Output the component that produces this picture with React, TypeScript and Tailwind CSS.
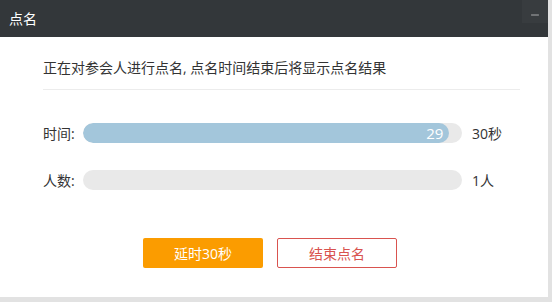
import { Minus } from 'lucide-react';

const font = { fontFamily: '"Open Sans", "Noto Sans CJK SC", sans-serif' };

function ProgressRow({ label, value, max, unit }: { label: string; value: number; max: number; unit: string }) {
  const pct = (value / max) * 100;
  return (
    <div className="flex items-center h-5">
      <span className="w-10 text-[14px] text-[#333]">{label}</span>
      <div className="w-[379px] h-5 rounded-full bg-[#e9e9e9] overflow-hidden">
        {value > 0 && (
          <div
            className="h-full rounded-full bg-[#a3c6db] flex items-center justify-end pr-[6px] text-white text-[15px]"
            style={{ width: `${pct}%` }}
          >
            {value}
          </div>
        )}
      </div>
      <span className="ml-[10px] text-[14px] text-[#333]">{unit}</span>
    </div>
  );
}

export default function App() {
  return (
    <div className="w-[552px] h-[302px] bg-[#e2e2e2] overflow-hidden" style={font}>
      <div className="w-[548px] h-[297px] bg-white flex flex-col">
        {/* Header */}
        <div className="h-[37px] bg-[#33373a] flex items-start justify-between">
          <span className="pl-[9px] text-white text-[14px] leading-[37px]">点名</span>
          <div className="w-[26px] h-[23px] bg-[#383c3f] flex items-center justify-center">
            <Minus className="w-3 h-3 text-[#cfd0d1] mt-[6px]" strokeWidth={1.5} />
          </div>
        </div>

        {/* Body */}
        <div className="px-[43px] pt-[20px]">
          <p className="text-[14px] text-[#333] leading-[22px]">正在对参会人进行点名, 点名时间结束后将显示点名结果</p>
          <div className="mt-[10px] mr-[-15px] border-t border-[#ececec]" />

          <div className="mt-[33px] flex flex-col gap-[27px]">
            <ProgressRow label="时间:" value={29} max={30} unit="30秒" />
            <ProgressRow label="人数:" value={0} max={1} unit="1人" />
          </div>

          <div className="mt-[48px] flex justify-center gap-[14px] pr-[8px]">
            <button className="w-[120px] h-[30px] bg-[#fb9c00] rounded-[2px] text-white text-[14px]">延时30秒</button>
            <button className="w-[120px] h-[30px] border border-[#d9534f] rounded-[2px] text-[#d9534f] text-[14px] bg-white">
              结束点名
            </button>
          </div>
        </div>
      </div>
    </div>
  );
}
